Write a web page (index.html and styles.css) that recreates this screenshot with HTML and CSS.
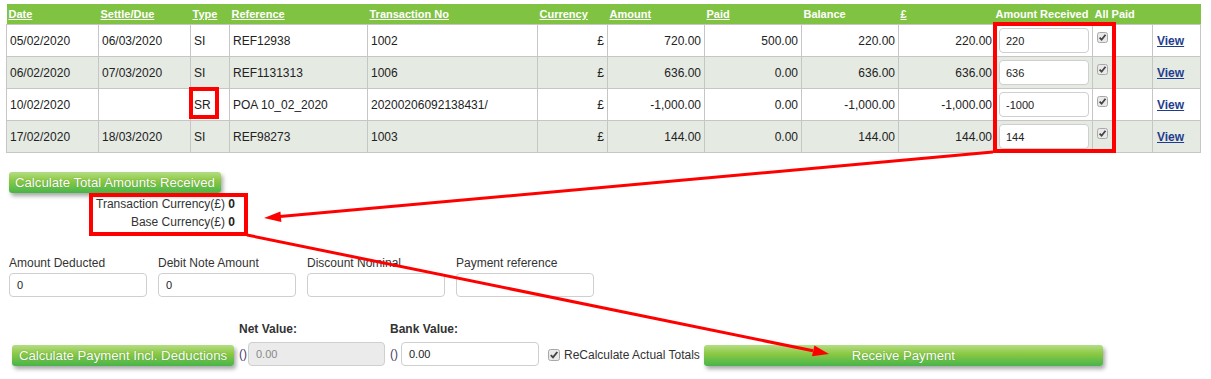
FILE: index.html
```html
<!DOCTYPE html>
<html lang="en">
<head>
    <meta charset="UTF-8">
    <title>Receive Payment</title>
    <link rel="stylesheet" href="styles.css">
</head>
<body>
    <div class="page">
        <table class="ledger">
            <colgroup>
                <col style="width:92px"><col style="width:92px"><col style="width:39px"><col style="width:138px">
                <col style="width:170px"><col style="width:70px"><col style="width:97px"><col style="width:97px">
                <col style="width:97px"><col style="width:95px"><col style="width:99px"><col style="width:60px">
                <col style="width:48px">
            </colgroup>
            <thead>
                <tr>
                    <th><a href="#">Date</a></th>
                    <th><a href="#">Settle/Due</a></th>
                    <th><a href="#">Type</a></th>
                    <th><a href="#">Reference</a></th>
                    <th><a href="#">Transaction No</a></th>
                    <th><a href="#">Currency</a></th>
                    <th><a href="#">Amount</a></th>
                    <th><a href="#">Paid</a></th>
                    <th>Balance</th>
                    <th><a href="#">£</a></th>
                    <th>Amount Received</th>
                    <th>All Paid</th>
                    <th></th>
                </tr>
            </thead>
            <tbody>
                <tr>
                    <td>05/02/2020</td><td>06/03/2020</td><td>SI</td><td>REF12938</td><td>1002</td>
                    <td class="num">£</td><td class="num">720.00</td><td class="num">500.00</td>
                    <td class="num">220.00</td><td class="num base">220.00</td>
                    <td class="recv"><input class="amount" type="text" value="220"></td>
                    <td class="paid"><svg class="tick" width="11" height="11" viewBox="0 0 11 11"><rect x=".5" y=".5" width="10" height="10" rx="2" fill="#e9e9e9" stroke="#a8a8a8"/><path d="M2.6 5.6l2 2.1 3.9-5" fill="none" stroke="#444" stroke-width="1.8"/></svg></td>
                    <td><a class="view" href="#">View</a></td>
                </tr>
                <tr>
                    <td>06/02/2020</td><td>07/03/2020</td><td>SI</td><td>REF1131313</td><td>1006</td>
                    <td class="num">£</td><td class="num">636.00</td><td class="num">0.00</td>
                    <td class="num">636.00</td><td class="num base">636.00</td>
                    <td class="recv"><input class="amount" type="text" value="636"></td>
                    <td class="paid"><svg class="tick" width="11" height="11" viewBox="0 0 11 11"><rect x=".5" y=".5" width="10" height="10" rx="2" fill="#e9e9e9" stroke="#a8a8a8"/><path d="M2.6 5.6l2 2.1 3.9-5" fill="none" stroke="#444" stroke-width="1.8"/></svg></td>
                    <td><a class="view" href="#">View</a></td>
                </tr>
                <tr>
                    <td>10/02/2020</td><td></td><td>SR</td><td>POA 10_02_2020</td><td>20200206092138431/</td>
                    <td class="num">£</td><td class="num">-1,000.00</td><td class="num">0.00</td>
                    <td class="num">-1,000.00</td><td class="num base">-1,000.00</td>
                    <td class="recv"><input class="amount" type="text" value="-1000"></td>
                    <td class="paid"><svg class="tick" width="11" height="11" viewBox="0 0 11 11"><rect x=".5" y=".5" width="10" height="10" rx="2" fill="#e9e9e9" stroke="#a8a8a8"/><path d="M2.6 5.6l2 2.1 3.9-5" fill="none" stroke="#444" stroke-width="1.8"/></svg></td>
                    <td><a class="view" href="#">View</a></td>
                </tr>
                <tr>
                    <td>17/02/2020</td><td>18/03/2020</td><td>SI</td><td>REF98273</td><td>1003</td>
                    <td class="num">£</td><td class="num">144.00</td><td class="num">0.00</td>
                    <td class="num">144.00</td><td class="num base">144.00</td>
                    <td class="recv"><input class="amount" type="text" value="144"></td>
                    <td class="paid"><svg class="tick" width="11" height="11" viewBox="0 0 11 11"><rect x=".5" y=".5" width="10" height="10" rx="2" fill="#e9e9e9" stroke="#a8a8a8"/><path d="M2.6 5.6l2 2.1 3.9-5" fill="none" stroke="#444" stroke-width="1.8"/></svg></td>
                    <td><a class="view" href="#">View</a></td>
                </tr>
            </tbody>
        </table>

        <div class="totals">
            <button class="btn" type="button">Calculate Total Amounts Received</button>
            <div class="sums">
                <div>Transaction Currency(£) <b>0</b></div>
                <div>Base Currency(£) <b>0</b></div>
            </div>
        </div>

        <div class="deductions">
            <div class="field">
                <label>Amount Deducted</label>
                <input class="box" type="text" value="0">
            </div>
            <div class="field">
                <label>Debit Note Amount</label>
                <input class="box" type="text" value="0">
            </div>
            <div class="field">
                <label>Discount Nominal</label>
                <input class="box" type="text" value="">
            </div>
            <div class="field">
                <label>Payment reference</label>
                <input class="box" type="text" value="">
            </div>
        </div>

        <div class="payment">
            <button class="btn btn-calc" type="button">Calculate Payment Incl. Deductions</button>
            <div class="value">
                <label>Net Value:</label>
                <div class="value-row"><span class="paren">()</span><input class="box net" type="text" value="0.00" disabled></div>
            </div>
            <div class="value">
                <label>Bank Value:</label>
                <div class="value-row"><span class="paren">()</span><input class="box bank" type="text" value="0.00"></div>
            </div>
            <label class="recalc"><svg class="tick" width="12" height="12" viewBox="0 0 12 12"><rect x=".5" y=".5" width="11" height="11" rx="2" fill="#e9e9e9" stroke="#a8a8a8"/><path d="M2.8 6.1l2.2 2.3 4.3-5.4" fill="none" stroke="#444" stroke-width="1.9"/></svg>ReCalculate Actual Totals</label>
            <button class="btn btn-receive" type="button">Receive Payment</button>
        </div>

        <!-- annotation marks drawn over the form -->
        <svg class="marks" width="1211" height="379" viewBox="0 0 1211 379">
            <g fill="none" stroke="#f00" stroke-width="4">
                <rect x="995" y="24" width="119" height="127"/>
                <rect x="191" y="89" width="26" height="28"/>
                <rect x="91" y="195" width="155" height="39"/>
            </g>
            <g stroke="#f00" stroke-width="3">
                <line x1="993" y1="152" x2="280" y2="216.6"/>
                <line x1="247" y1="235" x2="813" y2="350.8"/>
            </g>
            <g fill="#f00">
                <polygon points="264,218 281.4,222 280.4,211.4"/>
                <polygon points="829,354 812,356.2 814.4,345.4"/>
            </g>
        </svg>
    </div>
</body>
</html>
```

FILE: styles.css
```css
body {
    margin: 0;
    padding: 0;
    font-family: "Liberation Sans", Arial, sans-serif;
    font-size: 12px;
    color: #333;
    background: #fff;
}

.page {
    position: relative;
    padding: 4px 6px 0;
    height: 375px;
}

/* ledger table */
.ledger {
    width: 1194px;
    border-collapse: collapse;
    table-layout: fixed;
}

.ledger th {
    height: 20px;
    padding: 0 0 0 2px;
    background: #80c342;
    color: #fff;
    font-size: 11px;
    font-weight: bold;
    text-align: left;
    white-space: nowrap;
}

.ledger th a {
    color: #fff;
}

.ledger tbody tr {
    height: 32px;
}

.ledger td {
    padding: 0 3px;
    border: 1px solid #c6c6c6;
    color: #222;
    white-space: nowrap;
    vertical-align: middle;
}

.ledger tbody tr:nth-child(even) td {
    background: #e5eae3;
}

.ledger td.num {
    text-align: right;
}

.ledger td.base {
    padding-right: 1px;
}

.ledger td.recv {
    padding: 0 0 0 5px;
}

.ledger td.paid {
    padding: 7px 0 0 4px;
    vertical-align: top;
}

.amount {
    box-sizing: border-box;
    width: 90px;
    height: 25px;
    padding: 0 6px;
    border: 1px solid #cfcfcf;
    border-radius: 4px;
    font-family: inherit;
    font-size: 11px;
    color: #222;
    background: #fff;
    display: block;
}

.tick {
    display: block;
}

.view {
    color: #1f3d8c;
    font-weight: bold;
    padding-left: 1px;
}

/* buttons */
.btn {
    height: 21px;
    padding: 0 6px;
    border: 0;
    border-radius: 3px;
    background: linear-gradient(#b4dd86, #8ec944 40%, #46b54a);
    box-shadow: 2px 3px 4px rgba(0, 0, 0, 0.35);
    color: #fff;
    font-family: inherit;
    font-size: 13.2px;
    line-height: 21px;
    text-shadow: 0 0 1px rgba(30, 90, 20, 0.5);
    cursor: pointer;
}

/* totals */
.totals {
    margin: 19px 0 0 3px;
}

.sums {
    width: 226px;
    padding-top: 2px;
    line-height: 18px;
    text-align: right;
}

.sums b {
    color: #222;
}

/* deduction fields */
.deductions {
    display: flex;
    gap: 11px;
    margin: 24px 0 0 3px;
}

.field label,
.value label {
    display: block;
    height: 16px;
    line-height: 16px;
    margin-bottom: 2px;
}

.box {
    box-sizing: border-box;
    width: 138px;
    height: 24px;
    padding: 0 7px;
    border: 1px solid #cfcfcf;
    border-radius: 4px;
    font-family: inherit;
    font-size: 11px;
    color: #222;
    background: #fff;
    display: block;
}

/* payment row */
.payment {
    display: flex;
    align-items: flex-end;
    margin: 24px 0 0 6px;
}

.btn-calc {
    width: 222px;
}

.value {
    margin-left: 5px;
}

.value + .value {
    margin-left: 5px;
}

.value label {
    font-weight: bold;
    margin-bottom: 5px;
}

.value-row {
    display: flex;
    align-items: center;
}

.paren {
    color: #4b3a6b;
    margin-right: 1px;
}

.box.net {
    width: 137px;
    background: #ebebeb;
    color: #888;
}

.box.bank {
    margin-left: 2px;
}

.recalc {
    display: flex;
    align-items: center;
    gap: 4px;
    margin: 0 4px 4px 9px;
}

.btn-receive {
    width: 399px;
}

/* annotations */
.marks {
    position: absolute;
    top: 0;
    left: 0;
    pointer-events: none;
}
```
